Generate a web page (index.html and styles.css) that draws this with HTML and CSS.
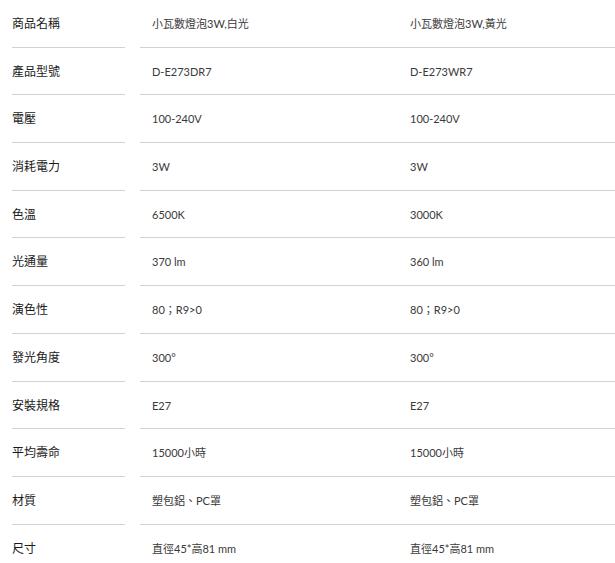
FILE: index.html
```html
<!DOCTYPE html>
<html lang="zh-Hant">
<head>
<meta charset="utf-8">
<title>規格</title>
<link rel="stylesheet" href="styles.css">
</head>
<body>
<div class="spec">
  <div class="row"><div class="label">商品名稱</div><div class="val">小瓦數燈泡3W,白光</div><div class="val">小瓦數燈泡3W,黃光</div></div>
  <div class="row"><div class="label">產品型號</div><div class="val">D-E273DR7</div><div class="val">D-E273WR7</div></div>
  <div class="row"><div class="label">電壓</div><div class="val">100-240V</div><div class="val">100-240V</div></div>
  <div class="row"><div class="label">消耗電力</div><div class="val">3W</div><div class="val">3W</div></div>
  <div class="row"><div class="label">色溫</div><div class="val">6500K</div><div class="val">3000K</div></div>
  <div class="row"><div class="label">光通量</div><div class="val">370 lm</div><div class="val">360 lm</div></div>
  <div class="row"><div class="label">演色性</div><div class="val">80；R9&gt;0</div><div class="val">80；R9&gt;0</div></div>
  <div class="row"><div class="label">發光角度</div><div class="val">300°</div><div class="val">300°</div></div>
  <div class="row"><div class="label">安裝規格</div><div class="val">E27</div><div class="val">E27</div></div>
  <div class="row"><div class="label">平均壽命</div><div class="val">15000小時</div><div class="val">15000小時</div></div>
  <div class="row"><div class="label">材質</div><div class="val">塑包鋁、PC罩</div><div class="val">塑包鋁、PC罩</div></div>
  <div class="row last"><div class="label">尺寸</div><div class="val">直徑45*高81 mm</div><div class="val">直徑45*高81 mm</div></div>
</div>
</body>
</html>
```
FILE: styles.css
```css
html, body {
  margin: 0;
  padding: 0;
  background: #fff;
}
body {
  font-family: Lato, "Noto Sans CJK TC", sans-serif;
  font-size: 12px;
  color: #333;
}
.spec {
  padding-left: 12px;
  width: 603px;
  overflow: hidden;
}
.row {
  display: grid;
  grid-template-columns: 128px 258px 1fr;
}
.label, .val {
  padding: 15px 0 14.7px;
  line-height: 17px;
  border-bottom: 1px solid #d2d2d2;
  white-space: nowrap;
}
.label {
  color: #1a1a1a;
  margin-right: 15px;
}
.val {
  padding-left: 12px;
  font-size: 11px;
  color: #3a3a3a;
}
.row.last .label, .row.last .val {
  border-bottom-color: transparent;
}
```
